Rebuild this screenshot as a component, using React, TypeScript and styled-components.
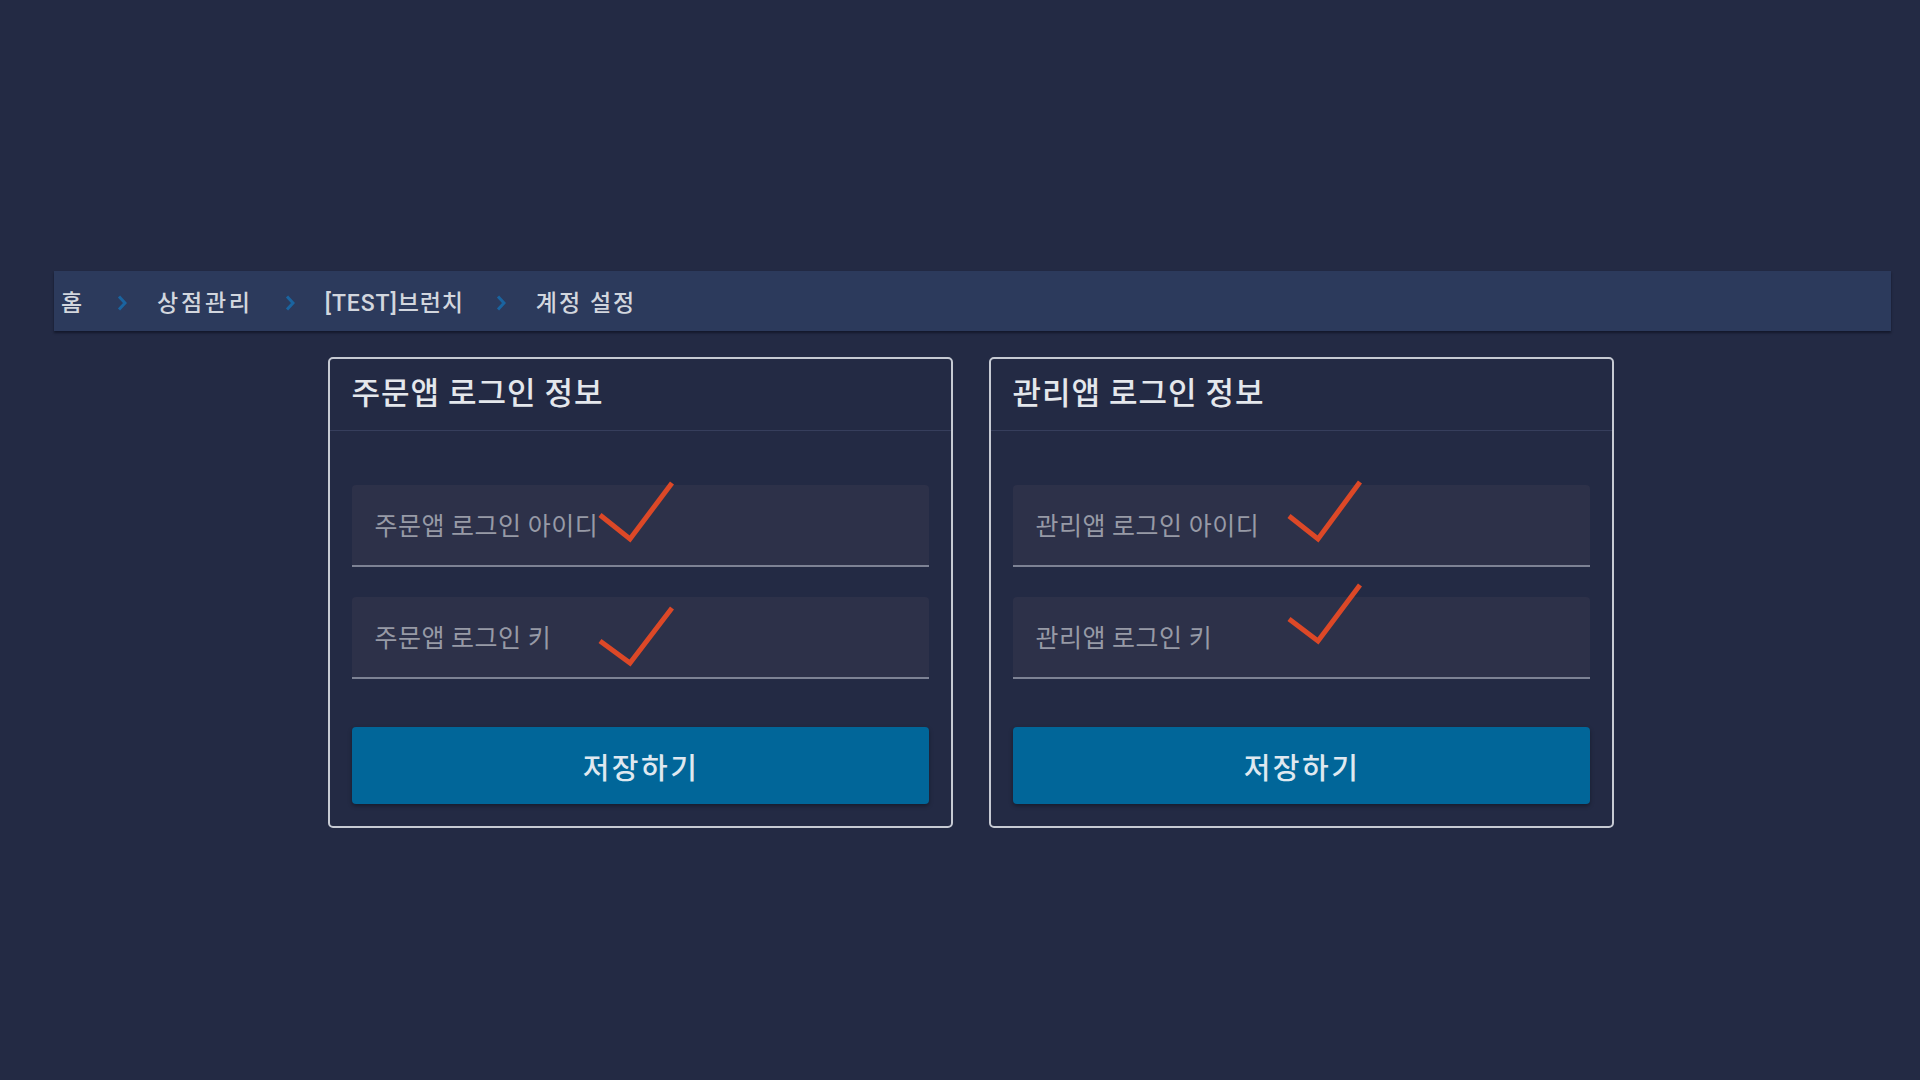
import React from "react";
import styled, { createGlobalStyle } from "styled-components";

const Global = createGlobalStyle`
  html, body { margin: 0; padding: 0; background: #232a44; }
  body { font-family: Roboto, "Noto Sans CJK KR", "Noto Sans", sans-serif; }
  * { box-sizing: border-box; }
`;

const Page = styled.div`
  min-height: 1080px;
  padding: 271px 29px 0 54px;
  background: #232a44;
`;

const Breadcrumb = styled.nav`
  height: 60px;
  background: #2c3a5c;
  box-shadow: 0 2px 2px rgba(10, 14, 28, 0.6);
  display: flex;
  align-items: center;
  padding: 4px 0 0 7px;
  font-family: Roboto, "Noto Sans CJK KR", sans-serif;
  font-size: 23px;
  font-weight: 500;
  color: #d2d6de;
`;

const Crumb = styled.span<{ $ls?: number }>`
  line-height: 1;
  white-space: nowrap;
  letter-spacing: ${(p) => p.$ls ?? 2.8}px;
`;

const Sep = styled.span`
  display: flex;
  align-items: center;
  margin: 0 30px 0 32px;
`;

const Cards = styled.div`
  display: flex;
  justify-content: center;
  gap: 36px;
  margin-top: 26px;
  padding-right: 4px;
`;

const Card = styled.section`
  width: 625px;
  border: 2px solid #c6cad3;
  border-radius: 5px;
  background: #232a44;
  display: flex;
  flex-direction: column;
`;

const CardHeader = styled.header`
  height: 72px;
  border-bottom: 1px solid #363e5c;
  display: flex;
  align-items: center;
  padding: 0 22px 8px;
`;

const Title = styled.h2`
  margin: 0;
  font-family: "Noto Sans CJK KR", sans-serif;
  font-weight: 500;
  font-size: 31px;
  color: #e4e7ec;
  letter-spacing: 1px;
`;

const CardBody = styled.div`
  padding: 54px 22px 22px;
  display: flex;
  flex-direction: column;
`;

const Field = styled.div<{ $mt?: number }>`
  position: relative;
  height: 82px;
  margin-top: ${(p) => p.$mt ?? 0}px;
  background: #2d3149;
  border-radius: 4px 4px 0 0;
  border-bottom: 2px solid #7d8294;
  display: flex;
  align-items: center;
  padding-left: 23px;
`;

const Placeholder = styled.span`
  font-family: "Noto Sans CJK KR", sans-serif;
  font-size: 25px;
  color: #979aa6;
  letter-spacing: 0.5px;
  margin-top: -2px;
`;

const Check = styled.svg`
  position: absolute;
  left: 0;
  top: 0;
  width: 100%;
  height: 100%;
  overflow: visible;
  pointer-events: none;
`;

const SaveButton = styled.button`
  margin-top: 48px;
  height: 77px;
  border: none;
  border-radius: 4px;
  background: #016699;
  color: #dfe8f0;
  font-family: "Noto Sans CJK KR", sans-serif;
  font-size: 29px;
  font-weight: 500;
  letter-spacing: 2.5px;
  padding: 0 0 0 2px;
  box-shadow: 0 2px 4px rgba(0, 0, 0, 0.35);
  cursor: pointer;
`;

const Chevron = () => (
  <svg width="10" height="16" viewBox="0 0 10 16">
    <path d="M2 1.5 L8 8 L2 14.5" fill="none" stroke="#1a64a0" strokeWidth="3" />
  </svg>
);

type Pt = [number, number];
const Mark = ({ pts }: { pts: Pt[] }) => (
  <Check>
    <polyline
      points={pts.map((p) => p.join(",")).join(" ")}
      fill="none"
      stroke="#dc4827"
      strokeWidth="5"
      strokeLinejoin="miter"
    />
  </Check>
);

type CardData = {
  title: string;
  idLabel: string;
  keyLabel: string;
  idMark: Pt[];
  keyMark: Pt[];
};

const cards: CardData[] = [
  {
    title: "주문앱 로그인 정보",
    idLabel: "주문앱 로그인 아이디",
    keyLabel: "주문앱 로그인 키",
    idMark: [[248, 30], [278, 54], [320, -2]],
    keyMark: [[248, 44], [278, 66], [320, 11]],
  },
  {
    title: "관리앱 로그인 정보",
    idLabel: "관리앱 로그인 아이디",
    keyLabel: "관리앱 로그인 키",
    idMark: [[276, 31], [305, 54], [347, -3]],
    keyMark: [[276, 22], [305, 44], [347, -12]],
  },
];

const crumbs: { label: string; ls?: number }[] = [
  { label: "홈" },
  { label: "상점관리" },
  { label: "[TEST]브런치", ls: 0.9 },
  { label: "계정 설정", ls: 2 },
];

export default function App() {
  return (
    <>
      <Global />
      <Page>
        <Breadcrumb>
          {crumbs.map((c, i) => (
            <React.Fragment key={c.label}>
              {i > 0 && (
                <Sep>
                  <Chevron />
                </Sep>
              )}
              <Crumb $ls={c.ls}>{c.label}</Crumb>
            </React.Fragment>
          ))}
        </Breadcrumb>
        <Cards>
          {cards.map((c) => (
            <Card key={c.title}>
              <CardHeader>
                <Title>{c.title}</Title>
              </CardHeader>
              <CardBody>
                <Field>
                  <Placeholder>{c.idLabel}</Placeholder>
                  <Mark pts={c.idMark} />
                </Field>
                <Field $mt={30}>
                  <Placeholder>{c.keyLabel}</Placeholder>
                  <Mark pts={c.keyMark} />
                </Field>
                <SaveButton>저장하기</SaveButton>
              </CardBody>
            </Card>
          ))}
        </Cards>
      </Page>
    </>
  );
}
